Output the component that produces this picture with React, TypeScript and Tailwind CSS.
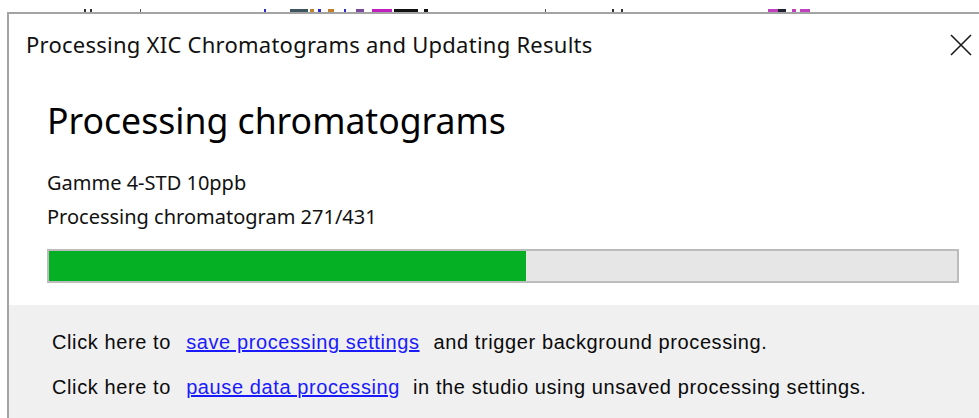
import React from "react";

function CloseIcon() {
  return (
    <svg width="22" height="22" viewBox="0 0 22 22" fill="none">
      <path d="M1 1 L21 21 M21 1 L1 21" stroke="#1a1a1a" strokeWidth="1.6" />
    </svg>
  );
}

// fragments of the window behind the dialog, sitting on its top edge
const marks: { x: number; w: number; c: string }[] = [
  { x: 84, w: 2, c: "#333" },
  { x: 90, w: 2, c: "#333" },
  { x: 140, w: 1, c: "#555" },
  { x: 264, w: 2, c: "#2a2ad0" },
  { x: 290, w: 18, c: "#3f5560" },
  { x: 310, w: 4, c: "#c08030" },
  { x: 318, w: 3, c: "#2a2ad0" },
  { x: 328, w: 6, c: "#c08030" },
  { x: 344, w: 2, c: "#2a2ad0" },
  { x: 356, w: 8, c: "#7a4aa0" },
  { x: 372, w: 20, c: "#c020c0" },
  { x: 394, w: 24, c: "#111" },
  { x: 424, w: 4, c: "#111" },
  { x: 545, w: 1, c: "#555" },
  { x: 612, w: 2, c: "#333" },
  { x: 621, w: 2, c: "#333" },
  { x: 768, w: 10, c: "#c040c0" },
  { x: 778, w: 8, c: "#223" },
  { x: 792, w: 4, c: "#c040c0" },
  { x: 800, w: 10, c: "#c040c0" },
];

export default function App() {
  return (
    <div
      className="w-[979px] h-[418px] bg-white overflow-hidden flex flex-col"
      style={{ fontFamily: '"Noto Sans", "Open Sans", sans-serif' }}
    >
      <div className="h-[12px] flex items-end">
        {marks.map((m, i) => (
          <div
            key={i}
            className="h-[3px]"
            style={{
              width: m.w,
              background: m.c,
              marginLeft: i === 0 ? m.x : m.x - marks[i - 1].x - marks[i - 1].w,
            }}
          />
        ))}
      </div>
      <div className="flex-1 ml-[7px] border-l-2 border-t-2 border-[#a3a3a3] flex flex-col">
        <div className="h-[62px] flex items-center justify-between pl-[17px] pr-[7px]">
          <span className="text-[22px] text-[#111] tracking-[0.25px] mt-[-1px]">
            Processing XIC Chromatograms and Updating Results
          </span>
          <CloseIcon />
        </div>
        <div className="pl-[38px] pr-[20px] pt-[24px] pb-[22px]">
          <div className="text-[35.6px] leading-[40px] text-black">Processing chromatograms</div>
          <div className="mt-[30px] text-[20px] leading-[26px] text-[#111]">Gamme 4-STD 10ppb</div>
          <div className="mt-[8px] text-[20px] leading-[26px] text-[#111]">Processing chromatogram 271/431</div>
          <div className="mt-[19px] h-[34px] border-2 border-[#bcbcbc] bg-[#e6e6e6] flex">
            <div className="h-full w-[52.5%] bg-[#06b025]" />
          </div>
        </div>
        <div
          className="flex-1 bg-[#f0f0f0] pl-[43px] pt-[24px] text-[20px] tracking-[0.6px] text-[#0a0a0a]"
          style={{ fontFamily: '"Liberation Sans", Arial, sans-serif' }}
        >
          <div className="leading-[26px]">
            Click here to{" "}
            <span className="ml-[9px] mr-[14px] text-[#1a1aff] underline">save processing settings</span>
            and trigger background processing.
          </div>
          <div className="leading-[26px] mt-[19px]">
            Click here to{" "}
            <span className="ml-[9px] mr-[13px] text-[#1a1aff] underline">pause data processing</span>
            in the studio using unsaved processing settings.
          </div>
        </div>
      </div>
    </div>
  );
}
